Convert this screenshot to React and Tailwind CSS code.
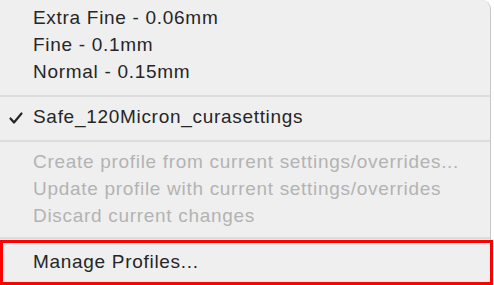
import React from 'react';

const Item = ({ label, checked, disabled }) => (
    <div className={`h-[27px] flex items-center pl-[33px] relative ${disabled ? "text-[#b3b3b3]" : "text-[#262626]"}`}>
        {checked &&
            <svg viewBox="0 0 14 12" className="absolute left-[9px] top-[8px] w-[14px] h-[12px]" fill="none" stroke="#262626" strokeWidth={2.2} strokeLinecap="round" strokeLinejoin="round">
                <path d="M1.5 6.5L5 10.5L12.5 1.5" />
            </svg>
        }
        <span>{label}</span>
    </div>
);

const Separator = () => <div className="h-[2px] bg-[#dcdcdc] mt-[9px] mb-[7px]" />;

export default function App() {
    return (
        <div className="w-[494px] h-[285px] bg-white overflow-hidden" style={{ fontFamily: '"Liberation Sans", Arial, sans-serif' }}>
            <div className="w-[491px] h-full bg-[#efefef] rounded-tr-[9px] border-r border-[#c8c8c8] text-[19px] tracking-[0.7px] pt-[5px] flex flex-col">
                <Item label="Extra Fine - 0.06mm" />
                <Item label="Fine - 0.1mm" />
                <Item label="Normal - 0.15mm" />
                <Separator />
                <Item label="Safe_120Micron_curasettings" checked />
                <Separator />
                <Item label="Create profile from current settings/overrides..." disabled />
                <Item label="Update profile with current settings/overrides" disabled />
                <Item label="Discard current changes" disabled />
                <div className="h-[2px] bg-[#dcdcdc] mt-[7px]" />
                <div className="mt-[1px] w-[493px] flex-1 border-[3px] border-[#ff0000] flex items-center pl-[30px] text-[#262626]">
                    Manage Profiles...
                </div>
            </div>
        </div>
    );
}
